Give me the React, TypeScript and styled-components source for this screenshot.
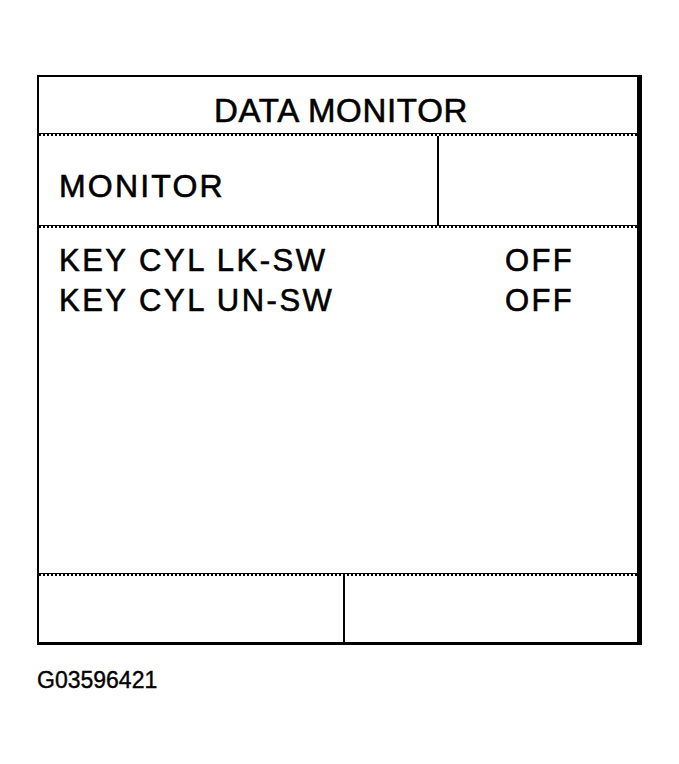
import * as React from "react";
import styled, { createGlobalStyle } from "styled-components";

const GlobalStyle = createGlobalStyle`
  html, body {
    margin: 0;
    padding: 0;
    background: #fff;
  }
  body {
    font-family: "Liberation Sans", Arial, sans-serif;
    color: #000;
  }
`;

const readings = [
  { label: "KEY CYL LK-SW", value: "OFF" },
  { label: "KEY CYL UN-SW", value: "OFF" },
];

export default function App() {
  return (
    <>
      <GlobalStyle />
      <Page>
        <Screen>
          <Title>DATA MONITOR</Title>

          <HeaderRow>
            <HeaderCell>MONITOR</HeaderCell>
            <HeaderSpare />
          </HeaderRow>

          <List>
            {readings.map((r) => (
              <Item key={r.label}>
                <Label>{r.label}</Label>
                <Value>{r.value}</Value>
              </Item>
            ))}
          </List>

          <Footer>
            <FooterButton />
            <FooterSpare />
          </Footer>
        </Screen>

        <Caption>G03596421</Caption>
      </Page>
    </>
  );
}

const Page = styled.div`
  padding: 75px 0 0 37px;
`;

const Screen = styled.div`
  width: 598px;
  display: flex;
  flex-direction: column;
  border: 2px solid #000;
  border-right-width: 5px;
  border-bottom-width: 3px;
`;

// screen text is a little heavier than plain regular weight
const ink = `
  -webkit-text-stroke: 0.6px #000;
`;

const rule = `
  border-bottom: 2px dotted #000;
  box-shadow: inset 0 -2px 0 -1px #000;
`;

const Title = styled.div`
  height: 40px;
  padding-top: 17px;
  padding-left: 6px;
  text-align: center;
  font-size: 33px;
  line-height: 33px;
  letter-spacing: 0.7px;
  ${ink}
  ${rule}
`;

const HeaderRow = styled.div`
  display: flex;
  height: 90px;
  ${rule}
`;

const HeaderCell = styled.div`
  width: 378px;
  padding: 34px 0 0 20px;
  border-right: 2px solid #000;
  font-size: 32px;
  line-height: 32px;
  letter-spacing: 2.2px;
  ${ink}
`;

const HeaderSpare = styled.div`
  flex: 1;
`;

const List = styled.div`
  height: 333px;
  padding: 13px 0 0 20px;
  ${rule}
`;

const Item = styled.div`
  display: grid;
  grid-template-columns: 446px auto;
  font-size: 31px;
  line-height: 40px;
  ${ink}
`;

const Label = styled.span`
  letter-spacing: 2.5px;
`;

const Value = styled.span`
  letter-spacing: 2.4px;
`;

const Footer = styled.div`
  display: flex;
  height: 66px;
`;

const FooterButton = styled.div`
  width: 304px;
  border-right: 2px solid #000;
`;

const FooterSpare = styled.div`
  flex: 1;
`;

const Caption = styled.div`
  margin-top: 24px;
  font-size: 23px;
  line-height: 23px;
  ${ink}
  -webkit-text-stroke-width: 0.4px;
`;
